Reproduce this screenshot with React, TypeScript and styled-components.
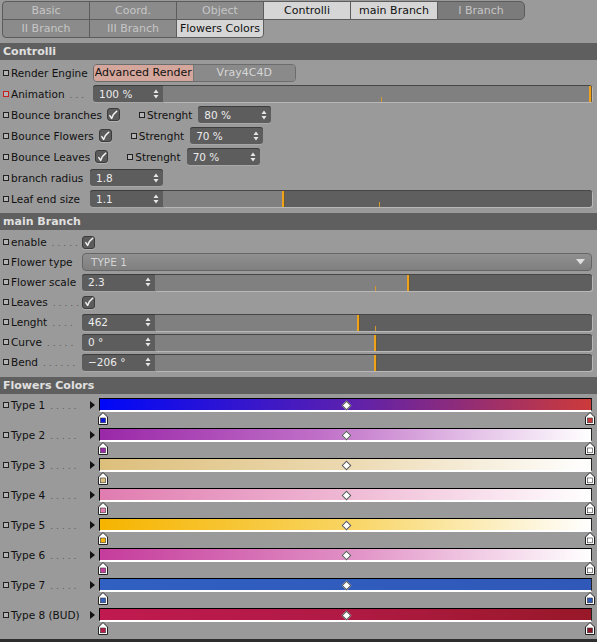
import React from 'react';
import styled, { createGlobalStyle } from 'styled-components';

const Global = createGlobalStyle`
  html, body { margin: 0; padding: 0; background: #9a9a9a; }
  body { font-family: "DejaVu Sans", "Liberation Sans", sans-serif; font-size: 10.5px; }
`;

const Page = styled.div`
  width: 597px;
  height: 642px;
  background: #9a9a9a;
  display: flex;
  flex-direction: column;
  overflow: hidden;
  font-size: 10.5px;
`;

const TabGrid = styled.div`
  display: grid;
  grid-template-columns: repeat(6, 87px);
  grid-auto-rows: 18px;
  padding: 1px 0 0 2px;
  margin-bottom: 6px;
`;

type TabTone = 'idle' | 'active' | 'dark';
const Tab = styled.div<{ $tone: TabTone; $radius?: string }>`
  box-sizing: border-box;
  border: 1px solid #5c5c5c;
  margin: 0 -1px -1px 0;
  border-radius: ${(p) => p.$radius || '0'};
  display: flex;
  align-items: center;
  justify-content: center;
  font-size: 11px;
  background: ${(p) => (p.$tone === 'active' ? '#d6d6d6' : p.$tone === 'dark' ? '#7b7b7b' : '#8b8b8b')};
  color: ${(p) => (p.$tone === 'active' ? '#111' : '#c6c6c6')};
`;

const Header = styled.div<{ $gap: number }>`
  height: 17px;
  line-height: 17px;
  background: #5f5f5f;
  color: #e0e0e0;
  font-weight: bold;
  font-size: 11px;
  padding-left: 3px;
  margin-bottom: 2px;
  margin-top: ${(p) => p.$gap}px;
`;

const Row = styled.div<{ $h: number }>`
  display: flex;
  align-items: center;
  height: ${(p) => p.$h}px;
  padding: 0 5px 0 3px;
`;

const Indicator = styled.span<{ $red?: boolean }>`
  box-sizing: border-box;
  width: 6px;
  height: 6px;
  border: 1px solid ${(p) => (p.$red ? '#c42020' : '#222')};
  background: #b4b4b4;
  margin-right: 2px;
  flex: none;
`;

const Label = styled.span<{ $w?: number; $mr?: number }>`
  width: ${(p) => (p.$w ? `${p.$w}px` : 'auto')};
  margin-right: ${(p) => p.$mr ?? 0}px;
  color: #111;
  white-space: nowrap;
  flex: none;
`;

const Dots = styled.span`
  color: #5a5a5a;
  letter-spacing: 3px;
  margin-left: 5px;
  font-size: 9px;
`;

const Field = styled.div<{ $w: number; $joined?: boolean }>`
  box-sizing: border-box;
  width: ${(p) => p.$w}px;
  height: 17px;
  flex: none;
  background: #5d5d5d;
  border-radius: ${(p) => (p.$joined ? '3px 0 0 3px' : '3px')};
  box-shadow: inset 0 1px 0 #3d3d3d, 0 1px 0 #a8a8a8;
  color: #ececec;
  display: flex;
  align-items: center;
  justify-content: space-between;
  padding: 0 4px 0 6px;
`;

const Track = styled.div`
  position: relative;
  flex: 1;
  height: 17px;
  border-radius: 0 3px 3px 0;
  box-shadow: inset 0 1px 0 #474747, 1px 1px 0 #b8b8b8;
`;

const Thumb = styled.div`
  position: absolute;
  top: 1px;
  bottom: 0;
  width: 2px;
  margin-left: -1px;
  background: #f0a21a;
  box-shadow: 1px 0 0 #6a5a3a;
`;

const Tick = styled.div`
  position: absolute;
  bottom: 0;
  width: 1px;
  height: 5px;
  background: #d39a30;
`;

const Segmented = styled.div`
  display: flex;
  width: 203px;
  height: 18px;
  box-sizing: border-box;
  border: 1px solid #6c6c6c;
  border-radius: 4px;
  overflow: hidden;
  font-size: 11px;
`;

const Segment = styled.div<{ $active?: boolean; $w: number }>`
  width: ${(p) => p.$w}px;
  display: flex;
  align-items: center;
  justify-content: center;
  background: ${(p) => (p.$active ? '#d5a69b' : '#8a8a8a')};
  color: ${(p) => (p.$active ? '#111' : '#d6d6d6')};
  border-right: ${(p) => (p.$active ? '1px solid #777' : 'none')};
`;

const CheckBox = styled.span<{ $ml?: number }>`
  box-sizing: border-box;
  width: 13px;
  height: 13px;
  flex: none;
  margin-left: ${(p) => p.$ml ?? 0}px;
  background: #5b5b5b;
  border: 1px solid #3c3c3c;
  border-radius: 3px;
  display: flex;
  align-items: center;
  justify-content: center;
  box-shadow: 0 1px 0 #b0b0b0;
`;

const Spacer = styled.span<{ $w: number }>`
  width: ${(p) => p.$w}px;
  flex: none;
`;

const Dropdown = styled.div`
  flex: 1;
  box-sizing: border-box;
  height: 18px;
  border: 1px solid #666;
  border-radius: 4px;
  background: linear-gradient(#909090, #7f7f7f);
  color: #d4d4d4;
  display: flex;
  align-items: center;
  justify-content: space-between;
  padding: 0 6px 0 8px;
`;

const ColorRow = styled.div`
  display: flex;
  align-items: flex-start;
  height: 30px;
  box-sizing: border-box;
  padding: 2px 5px 0 3px;
`;

const ColorLabel = styled.div`
  display: flex;
  align-items: center;
  height: 14px;
`;

const Arrow = styled.span`
  width: 10px;
  height: 14px;
  flex: none;
  display: flex;
  align-items: center;
  padding-left: 1px;
  box-sizing: border-box;
`;

const GradientCol = styled.div`
  flex: 1;
  display: flex;
  flex-direction: column;
`;

const GradientBar = styled.div`
  position: relative;
  height: 11px;
  border-top: 1px solid #000;
  border-left: 1px solid #000;
  border-right: 1px solid #222;
  border-bottom: 2px solid #fff;
`;

const Diamond = styled.span`
  position: absolute;
  left: 50%;
  top: 50%;
  width: 5px;
  height: 5px;
  margin: -3px 0 0 -3px;
  background: #fff;
  border: 1px solid #555;
  transform: rotate(45deg);
`;

const MarkerRow = styled.div`
  display: flex;
  justify-content: space-between;
  margin-right: -3px;
  margin-left: -1px;
`;

const BottomEdge = styled.div`
  margin-top: auto;
  height: 3px;
  background: #2e2e2e;
`;

const Spinner = () => (
  <svg width="6" height="10" viewBox="0 0 6 10">
    <path d="M3 0.5 L5.5 4 L0.5 4 Z M3 9.5 L5.5 6 L0.5 6 Z" fill="#e8e8e8" />
  </svg>
);

const Check = () => (
  <svg width="10" height="10" viewBox="0 0 10 10">
    <path d="M1.8 5.6 L3.6 8.4 Q5.5 3.5 8.8 1.2" stroke="#f2f2f2" strokeWidth="1.5" fill="none" strokeLinecap="round" strokeLinejoin="round" />
  </svg>
);

const Marker = ({ color }: { color: string }) => (
  <svg width="10" height="13" viewBox="0 0 10 13">
    <polygon points="0.5,5 5,0.5 9.5,5 9.5,12.5 0.5,12.5" fill="#fff" stroke="#222" strokeWidth="1" />
    <rect x="2.5" y="6" width="5" height="4.8" fill={color} stroke="#333" strokeWidth="0.6" />
  </svg>
);

const NumField = ({ w, value, joined }: { w: number; value: string; joined?: boolean }) => (
  <Field $w={w} $joined={joined}>
    <span>{value}</span>
    <Spinner />
  </Field>
);

const Slider = ({ pct, fill, tick }: { pct: number; fill: number; tick?: number }) => (
  <Track style={{ background: `linear-gradient(to right, #808080 ${fill}%, #5f5f5f ${fill}%)` }}>
    {tick !== undefined && <Tick style={{ left: `${tick}%` }} />}
    <Thumb style={{ left: pct >= 100 ? 'calc(100% - 2px)' : `${pct}%` }} />
  </Track>
);

const colorTypes = [
  { name: 'Type 1', dots: true, grad: 'linear-gradient(to right, #0008f8, #5a20b0 50%, #cc3a3a)', l: '#0a14e0', r: '#c83838' },
  { name: 'Type 2', dots: true, grad: 'linear-gradient(to right, #9a28a8, #c070c8 45%, #ffffff)', l: '#9a28a8', r: '#ffffff' },
  { name: 'Type 3', dots: true, grad: 'linear-gradient(to right, #ddbf7c, #ecd9b0 50%, #ffffff)', l: '#ddbf7c', r: '#ffffff' },
  { name: 'Type 4', dots: true, grad: 'linear-gradient(to right, #e07cb0, #efb8d4 50%, #ffffff)', l: '#e07cb0', r: '#ffffff' },
  { name: 'Type 5', dots: true, grad: 'linear-gradient(to right, #f6b400, #f8d460 50%, #ffffff)', l: '#f6b400', r: '#ffffff' },
  { name: 'Type 6', dots: true, grad: 'linear-gradient(to right, #c53c9c, #e08ec4 50%, #ffffff)', l: '#c53c9c', r: '#ffffff' },
  { name: 'Type 7', dots: true, grad: 'linear-gradient(to right, #3060c2, #3058b8)', l: '#3060c2', r: '#2f5ab8' },
  { name: 'Type 8 (BUD)', dots: false, grad: 'linear-gradient(to right, #c01a50, #b01a44 50%, #981828)', l: '#b81a4a', r: '#8a1424' },
];

export default function App() {
  return (
    <Page>
      <Global />
      <TabGrid>
        <Tab $tone="idle" $radius="4px 0 0 0">Basic</Tab>
        <Tab $tone="idle">Coord.</Tab>
        <Tab $tone="idle">Object</Tab>
        <Tab $tone="active">Controlli</Tab>
        <Tab $tone="active">main Branch</Tab>
        <Tab $tone="dark" $radius="0 5px 5px 0">I Branch</Tab>
        <Tab $tone="idle" $radius="0 0 0 4px">II Branch</Tab>
        <Tab $tone="idle">III Branch</Tab>
        <Tab $tone="active" $radius="0 0 4px 0">Flowers Colors</Tab>
      </TabGrid>

      <Header $gap={0}>Controlli</Header>
      <Row $h={21}>
        <Indicator />
        <Label $w={82}>Render Engine</Label>
        <Segmented>
          <Segment $active $w={100}>Advanced Render</Segment>
          <Segment $w={103}>Vray4C4D</Segment>
        </Segmented>
      </Row>
      <Row $h={21}>
        <Indicator $red />
        <Label $w={82}>Animation<Dots>...</Dots></Label>
        <NumField w={70} value="100 %" joined />
        <Slider pct={100} fill={100} tick={50.8} />
      </Row>
      <Row $h={21}>
        <Indicator />
        <Label $mr={5}>Bounce branches</Label>
        <CheckBox><Check /></CheckBox>
        <Spacer $w={19} />
        <Indicator />
        <Label $mr={6}>Strenght</Label>
        <NumField w={73} value="80 %" />
      </Row>
      <Row $h={21}>
        <Indicator />
        <Label $mr={5}>Bounce Flowers</Label>
        <CheckBox><Check /></CheckBox>
        <Spacer $w={19} />
        <Indicator />
        <Label $mr={6}>Strenght</Label>
        <NumField w={73} value="70 %" />
      </Row>
      <Row $h={21}>
        <Indicator />
        <Label $mr={5}>Bounce Leaves</Label>
        <CheckBox><Check /></CheckBox>
        <Spacer $w={19} />
        <Indicator />
        <Label $mr={6}>Strenght</Label>
        <NumField w={73} value="70 %" />
      </Row>
      <Row $h={21}>
        <Indicator />
        <Label $w={79}>branch radius</Label>
        <NumField w={73} value="1.8" />
      </Row>
      <Row $h={21}>
        <Indicator />
        <Label $w={79}>Leaf end size</Label>
        <NumField w={73} value="1.1" joined />
        <Slider pct={28} fill={28} tick={50.3} />
      </Row>

      <Header $gap={4}>main Branch</Header>
      <Row $h={20}>
        <Indicator />
        <Label $w={71}>enable<Dots>.....</Dots></Label>
        <CheckBox><Check /></CheckBox>
      </Row>
      <Row $h={20}>
        <Indicator />
        <Label $w={71}>Flower type</Label>
        <Dropdown>
          <span>TYPE 1</span>
          <svg width="9" height="6" viewBox="0 0 9 6"><path d="M0 0 L9 0 L4.5 5.5 Z" fill="#e0e0e0" /></svg>
        </Dropdown>
      </Row>
      <Row $h={20}>
        <Indicator />
        <Label $w={71}>Flower scale</Label>
        <NumField w={73} value="2.3" joined />
        <Slider pct={57.9} fill={57.9} tick={50.3} />
      </Row>
      <Row $h={20}>
        <Indicator />
        <Label $w={71}>Leaves<Dots>.....</Dots></Label>
        <CheckBox><Check /></CheckBox>
      </Row>
      <Row $h={20}>
        <Indicator />
        <Label $w={71}>Lenght<Dots>....</Dots></Label>
        <NumField w={73} value="462" joined />
        <Slider pct={46.5} fill={46.5} tick={50.3} />
      </Row>
      <Row $h={20}>
        <Indicator />
        <Label $w={71}>Curve<Dots>.....</Dots></Label>
        <NumField w={73} value="0 °" joined />
        <Slider pct={50.3} fill={50.3} />
      </Row>
      <Row $h={20}>
        <Indicator />
        <Label $w={71}>Bend<Dots>......</Dots></Label>
        <NumField w={73} value="−206 °" joined />
        <Slider pct={50.3} fill={50.3} />
      </Row>

      <Header $gap={5}>Flowers Colors</Header>
      {colorTypes.map((t) => (
        <ColorRow key={t.name}>
          <ColorLabel>
            <Indicator />
            <Label $w={78}>
              {t.name}
              {t.dots && <Dots>.....</Dots>}
            </Label>
          </ColorLabel>
          <Arrow>
            <svg width="5" height="8" viewBox="0 0 5 8"><path d="M0 0 L5 4 L0 8 Z" fill="#111" /></svg>
          </Arrow>
          <GradientCol>
            <GradientBar style={{ background: t.grad }}>
              <Diamond />
            </GradientBar>
            <MarkerRow>
              <Marker color={t.l} />
              <Marker color={t.r} />
            </MarkerRow>
          </GradientCol>
        </ColorRow>
      ))}
      <BottomEdge />
    </Page>
  );
}
